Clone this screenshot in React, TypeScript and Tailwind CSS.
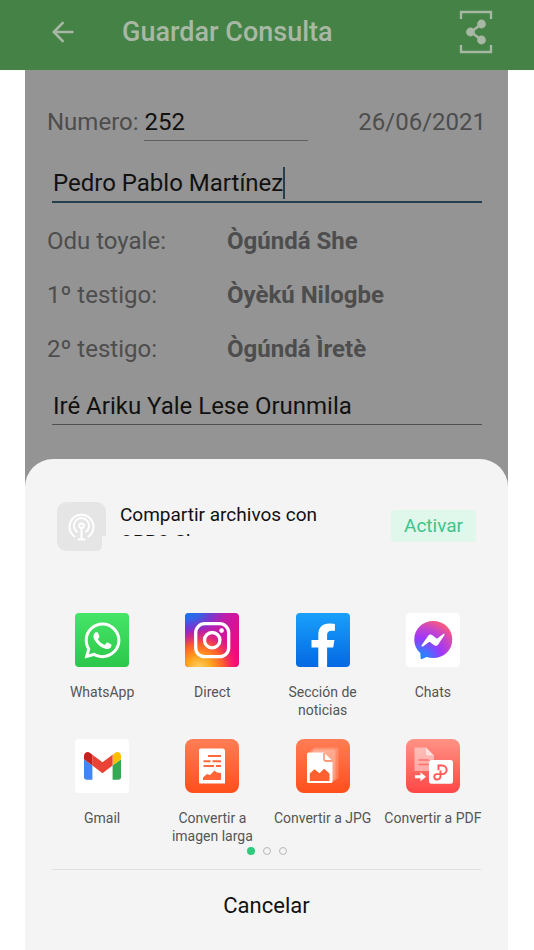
import React from "react";
import { FaWhatsapp } from "react-icons/fa";

type ShareApp = {
  name: string;
  icon: React.ReactNode;
};

const testigos = [
  { label: "Odu toyale:", value: "Ògúndá She" },
  { label: "1º testigo:", value: "Òyèkú Nilogbe" },
  { label: "2º testigo:", value: "Ògúndá Ìretè" },
];

function BackIcon() {
  return (
    <svg width="22" height="22" viewBox="0 0 22 22" fill="none" stroke="currentColor" strokeWidth="2.5">
      <path d="M11.5 1.200 1.800 11l9.700 9.800M2 11h19.500" />
    </svg>
  );
}

function ShareFrameIcon() {
  return (
    <svg width="34" height="44" viewBox="0 0 34 44" fill="none" stroke="currentColor" strokeWidth="2.3">
      <path d="M2 9V2h30v7M2 35v7h30v-7" />
      <path d="M22.500 14 12 22l10.500 8" />
      <g fill="currentColor" stroke="none">
        <circle cx="22.5" cy="14" r="4.4" />
        <circle cx="11.5" cy="22" r="4.4" />
        <circle cx="22.5" cy="30" r="4.4" />
      </g>
    </svg>
  );
}

function BroadcastTile() {
  return (
    <svg width="49" height="49" viewBox="0 0 49 49" fill="none" className="shrink-0">
      <path d="M11 0h27q11 0 11 11v23h-4v9q0 6-6 6H11Q0 49 0 38V11Q0 0 11 0z" fill="#e5e5e5" />
      <g stroke="#fff" strokeWidth="2" strokeLinecap="round">
        <path d="M17.500 34.500a12 12 0 1 1 14 0" />
        <path d="M20 29.800a7.600 7.600 0 1 1 9 0" />
        <circle cx="24.5" cy="23.7" r="2.3" />
        <path d="M24.500 26v11.500M21.500 37.500h6" />
      </g>
    </svg>
  );
}

function WhatsAppIcon() {
  return (
    <div className="flex size-[54px] items-center justify-center rounded bg-linear-to-b from-[#45e567] to-[#2bc74a] text-white">
      <FaWhatsapp size={41} />
    </div>
  );
}

function InstagramIcon() {
  return (
    <svg width="54" height="54" viewBox="0 0 54 54">
      <defs>
        <linearGradient id="igBase" x1="0" y1="0" x2="1" y2="0.7">
          <stop offset="0" stopColor="#6a35d6" />
          <stop offset="0.45" stopColor="#b81fb0" />
          <stop offset="1" stopColor="#f0087c" />
        </linearGradient>
        <radialGradient id="igBlue" gradientUnits="userSpaceOnUse" cx="0" cy="0" r="42" gradientTransform="scale(1 0.5)">
          <stop offset="0" stopColor="#1479ee" />
          <stop offset="0.35" stopColor="#2c68e8" stopOpacity="0.9" />
          <stop offset="1" stopColor="#6a35d6" stopOpacity="0" />
        </radialGradient>
        <radialGradient id="igWarm" gradientUnits="userSpaceOnUse" cx="14" cy="56" r="42">
          <stop offset="0" stopColor="#ffd46a" />
          <stop offset="0.3" stopColor="#ffa51f" />
          <stop offset="0.6" stopColor="#ff5a2c" />
          <stop offset="1" stopColor="#f0107c" stopOpacity="0" />
        </radialGradient>
      </defs>
      <rect width="54" height="54" rx="4" fill="url(#igBase)" />
      <rect width="54" height="54" rx="4" fill="url(#igWarm)" />
      <rect width="54" height="54" rx="4" fill="url(#igBlue)" />
      <g fill="none" stroke="#fff" strokeWidth="3.3">
        <rect x="10.7" y="10.7" width="33" height="33" rx="9" />
        <circle cx="27.2" cy="27.2" r="7.7" />
      </g>
      <circle cx="36.6" cy="17.6" r="2.3" fill="#fff" />
    </svg>
  );
}

function FacebookIcon() {
  return (
    <svg width="54" height="54" viewBox="0 0 54 54">
      <defs>
        <linearGradient id="fb" x1="0" y1="0" x2="0" y2="1">
          <stop offset="0" stopColor="#18a0fb" />
          <stop offset="1" stopColor="#0468e2" />
        </linearGradient>
      </defs>
      <rect width="54" height="54" rx="4" fill="url(#fb)" />
      <path
        d="M22.3 54V34.5h-6.800V27h6.800v-5.300c0-7.500 4.400-11.300 11-11.300 2.200 0 4.200.2 5.600.5v6.900h-3.300c-3.300 0-4.500 1.600-4.500 4.200v5h7.300l-1.200 7.500h-6.100V54z"
        fill="#fff"
      />
    </svg>
  );
}

function MessengerIcon() {
  return (
    <svg width="54" height="54" viewBox="0 0 54 54">
      <defs>
        <radialGradient id="msg" gradientUnits="userSpaceOnUse" cx="14" cy="47" r="44">
          <stop offset="0" stopColor="#0f8fff" />
          <stop offset="0.2" stopColor="#3a78ff" />
          <stop offset="0.5" stopColor="#9c37fb" />
          <stop offset="0.75" stopColor="#c845c8" />
          <stop offset="1" stopColor="#ff5c74" />
        </radialGradient>
      </defs>
      <rect width="54" height="54" rx="4" fill="#fff" />
      <path
        d="M27.300 8C16.600 8 8.300 15.800 8.300 26.400c0 5.500 2.300 10.300 6 13.600l.3 5.200c.1.900.8 1.200 1.500.9l4.400-2c2 .6 4.300.9 6.800.9 10.700 0 19-7.800 19-18.500S38 8 27.300 8z"
        fill="url(#msg)"
      />
      <path
        d="M15.600 32.300l6.600-9.500c1-1.400 2.500-1.700 3.900-.7l4.200 3.100c.5.3.9.3 1.300 0l5.600-4.200c.9-.6 1.800.2 1.300 1.100l-6.300 9.400c-1 1.500-2.600 1.800-4 .7l-4.100-3c-.5-.3-.9-.3-1.400 0l-5.700 4.200c-.9.600-1.900-.2-1.400-1.100z"
        fill="#fff"
      />
    </svg>
  );
}

function GmailIcon() {
  return (
    <div className="flex size-[54px] items-center justify-center rounded bg-white">
      <svg width="37" height="28" viewBox="52 42 88 66">
        <path fill="#4285f4" d="M58 108h14V74L52 59v43c0 3.320 2.690 6 6 6" />
        <path fill="#34a853" d="M120 108h14c3.320 0 6-2.690 6-6V59l-20 15" />
        <path fill="#fbbc04" d="M120 48v26l20-15v-8c0-7.420-8.470-11.650-14.400-7.200" />
        <path fill="#ea4335" d="M72 74V48l24 18 24-18v26L96 92" />
        <path fill="#c5221f" d="M52 51v8l20 15V48l-5.600-4.200c-5.940-4.450-14.400-.22-14.400 7.200" />
      </svg>
    </div>
  );
}

function LongImageIcon() {
  return (
    <svg width="54" height="54" viewBox="0 0 54 54">
      <defs>
        <linearGradient id="longImg" x1="0" y1="0" x2="0" y2="1">
          <stop offset="0" stopColor="#ff7d55" />
          <stop offset="1" stopColor="#ff4f1c" />
        </linearGradient>
      </defs>
      <rect width="54" height="54" rx="8" fill="url(#longImg)" />
      <path d="M15.500 9.500h22q2.500 0 2.500 2.500v32.500H14V11q0-1.500 1.500-1.500z" fill="#fff" />
      <path
        d="M23 17h13M18.500 22.200h7M27.500 22.200H36M18.500 27h10.500M31 27h5"
        stroke="#ff6a3c"
        strokeWidth="1.9"
        fill="none"
      />
      <path d="M18 41v-2.500l4-3.500 3 1 4.500-4.500 2.500 2 4 .5v6.500q0 .5-.5.5z" fill="#ff6536" />
    </svg>
  );
}

function JpgIcon() {
  return (
    <svg width="54" height="54" viewBox="0 0 54 54">
      <defs>
        <linearGradient id="jpg" x1="0" y1="0" x2="0" y2="1">
          <stop offset="0" stopColor="#ff7d55" />
          <stop offset="1" stopColor="#ff4f1c" />
        </linearGradient>
      </defs>
      <rect width="54" height="54" rx="8" fill="url(#jpg)" />
      <rect x="17" y="8.5" width="25.5" height="32" rx="2" fill="#fff" opacity="0.2" />
      <rect x="14.5" y="10.5" width="25" height="32" rx="2" fill="#fff" opacity="0.25" />
      <path d="M12.500 13.500H28l8.500 8.500v20.500q0 1.500-1.500 1.500H12.500q-1.500 0-1.500-1.500V15q0-1.500 1.500-1.500z" fill="#fff" />
      <path d="M28 14v6.500q0 1.500 1.500 1.500h7" fill="none" stroke="#ff7a50" strokeWidth="1.3" />
      <path d="M13.800 42V34.500l4.700-4.300 5 4.100 4.700-4.600 5.300 4.800V42z" fill="#ff6030" />
    </svg>
  );
}

function PdfIcon() {
  return (
    <svg width="54" height="54" viewBox="0 0 54 54">
      <defs>
        <linearGradient id="pdf" x1="0" y1="0" x2="0" y2="1">
          <stop offset="0" stopColor="#ff9385" />
          <stop offset="1" stopColor="#ff4646" />
        </linearGradient>
      </defs>
      <rect width="54" height="54" rx="8" fill="url(#pdf)" />
      <path d="M8.500 8.500H20l8 8V21h-5v11H8.500z" fill="#fff" opacity="0.45" />
      <path d="M20 8.500v6.500q0 1.500 1.500 1.500H28z" fill="#fff" opacity="0.55" />
      <path d="M12.500 21h10M12.500 25.500h10" stroke="#ff6f68" strokeWidth="1.5" />
      <path d="M9 36.200h5.500v-3L20 37.700l-5.500 4.500v-3H9z" fill="#fff" />
      <rect x="23" y="21" width="24" height="23.8" rx="2.5" fill="#fff" />
      <path
        d="M32.500 31.200v-4.700H36c6.200 0 6.200 8.600 0 8.600h-5.200c-3.400 0-3.400 5.400 0 5.400 3 0 3.700-1.300 3.700-3.500v-5.500"
        fill="none"
        stroke="#ff5a55"
        strokeWidth="1.9"
      />
    </svg>
  );
}

const apps: ShareApp[] = [
  { name: "WhatsApp", icon: <WhatsAppIcon /> },
  { name: "Direct", icon: <InstagramIcon /> },
  { name: "Sección de noticias", icon: <FacebookIcon /> },
  { name: "Chats", icon: <MessengerIcon /> },
  { name: "Gmail", icon: <GmailIcon /> },
  { name: "Convertir a imagen larga", icon: <LongImageIcon /> },
  { name: "Convertir a JPG", icon: <JpgIcon /> },
  { name: "Convertir a PDF", icon: <PdfIcon /> },
];

function ShareSheet() {
  return (
    <section className="flex grow flex-col rounded-t-[28px] bg-[#f4f4f4] px-[27px] pt-[42px]">
      <div className="flex items-start px-[5px]">
        <div className="pt-px">
          <BroadcastTile />
        </div>
        <p className="ml-[14px] h-[35px] w-[220px] overflow-hidden text-[19px] leading-[27px] text-[#111]">
          Compartir archivos con OPPO Share
        </p>
        <button className="mt-[9px] ml-auto h-8 w-[85px] rounded-sm bg-[#e0f7eb] text-[19px] text-[#3fc48a]">
          Activar
        </button>
      </div>

      <div className="-mr-[7px] -ml-[5px] mt-[62px] grid grid-cols-4">
        {apps.map((app) => (
          <button key={app.name} className="flex h-[126px] flex-col items-center">
            {app.icon}
            <span className="mt-4 px-1 text-center text-[14px] leading-[18px] text-[#555]">
              {app.name}
            </span>
          </button>
        ))}
      </div>

      <div className="-mt-[18px] flex justify-center gap-2">
        <span className="size-2 rounded-full bg-[#2fca7d]" />
        <span className="size-2 rounded-full border border-[#b8b8b8]" />
        <span className="size-2 rounded-full border border-[#b8b8b8]" />
      </div>

      <button className="mt-[14px] border-t border-[#e0e0e0] pt-5 pb-7 text-[22px] leading-8 text-[#111]">
        Cancelar
      </button>
    </section>
  );
}

export default function App() {
  return (
    <div className="flex min-h-screen flex-col bg-white font-[Roboto,sans-serif]">
      <header className="flex h-[70px] items-center bg-[#458245] pr-[41px] pb-[6px] pl-[52px] text-[#a9b8a5]">
        <button aria-label="Volver">
          <BackIcon />
        </button>
        <h1 className="ml-12 text-[27px] leading-8 font-medium">Guardar Consulta</h1>
        <button aria-label="Compartir" className="ml-auto">
          <ShareFrameIcon />
        </button>
      </header>

      <main className="mr-[26px] ml-[25px] flex grow flex-col bg-[#949494] text-2xl text-[#4d4d4d]">
        <div className="px-[22px] pt-9">
          <div className="flex items-start">
            <label htmlFor="numero" className="leading-8">
              Numero:
            </label>
            <input
              id="numero"
              defaultValue="252"
              className="ml-[5px] h-[35px] w-[164px] border-b border-[#606060] pb-[3px] pl-px text-[#111] outline-none"
            />
            <span className="ml-auto leading-8">26/06/2021</span>
          </div>

          <div className="mr-1 ml-[5px] mt-[26px] flex items-start border-b-2 border-[#24404e] pb-[2px]">
            <input
              aria-label="Nombre"
              defaultValue="Pedro Pablo Martínez"
              className="h-8 [field-sizing:content] pl-px text-[#111] outline-none"
            />
            <span className="h-8 w-[2px] bg-[#24404e]" />
          </div>

          <dl className="mt-[11px] grid grid-cols-[180px_1fr]">
            {testigos.map((row) => (
              <React.Fragment key={row.label}>
                <dt className="leading-[54px]">{row.label}</dt>
                <dd className="leading-[54px] font-bold">{row.value}</dd>
              </React.Fragment>
            ))}
          </dl>

          <div className="mr-1 ml-[5px] mt-[14px] mb-[34px] border-b border-[#505050] pb-[2px]">
            <input
              aria-label="Iré"
              defaultValue="Iré Ariku Yale Lese Orunmila"
              className="h-8 w-full pl-px text-[#111] outline-none"
            />
          </div>
        </div>

        <ShareSheet />
      </main>
    </div>
  );
}
